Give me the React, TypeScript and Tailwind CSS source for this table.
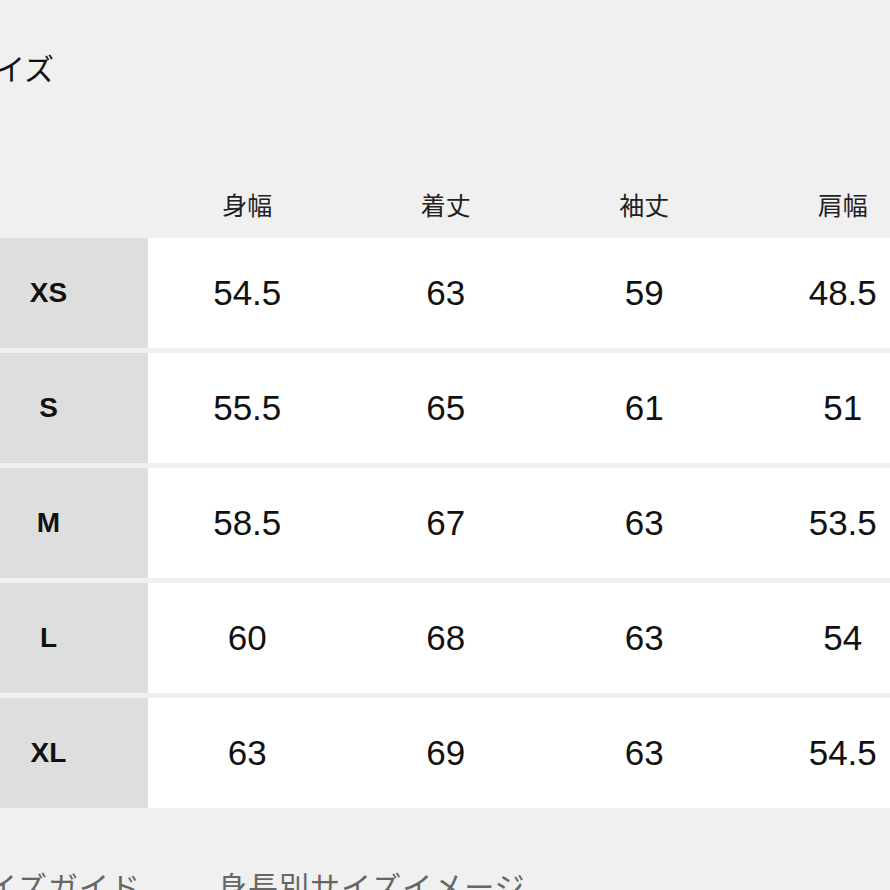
const headers = ["身幅", "着丈", "袖丈", "肩幅"];

const rows = [
  { size: "XS", values: ["54.5", "63", "59", "48.5"] },
  { size: "S", values: ["55.5", "65", "61", "51"] },
  { size: "M", values: ["58.5", "67", "63", "53.5"] },
  { size: "L", values: ["60", "68", "63", "54"] },
  { size: "XL", values: ["63", "69", "63", "54.5"] },
];

const jp = { fontFamily: '"Noto Sans CJK JP", "Noto Sans", sans-serif' };
const latin = { fontFamily: '"Liberation Sans", Arial, sans-serif' };

export default function App() {
  return (
    <main className="w-[890px] h-[890px] overflow-hidden bg-[#f0f0f0]">
      <div className="-ml-[51px] w-[993px]">
        <h2
          className="mt-[46px] pl-[16px] text-[30px] leading-[42px] text-[#111] font-normal"
          style={jp}
        >
          サイズ
        </h2>

        <div className="mt-[97px] grid grid-cols-[199px_repeat(4,198.5px)] h-[40px] items-center">
          <div />
          {headers.map((h) => (
            <div key={h} className="text-center text-[25px] text-[#222]" style={jp}>
              {h}
            </div>
          ))}
        </div>

        <div className="mt-[13px] flex flex-col gap-[5px]">
          {rows.map((row) => (
            <div
              key={row.size}
              className="grid grid-cols-[199px_repeat(4,198.5px)] h-[110px] items-stretch"
            >
              <div
                className="bg-[#dedede] flex items-center justify-center text-[28px] font-bold text-[#111]"
                style={latin}
              >
                {row.size}
              </div>
              {row.values.map((v, i) => (
                <div
                  key={i}
                  className="bg-white flex items-center justify-center text-[35px] text-[#111]"
                  style={latin}
                >
                  {v}
                </div>
              ))}
            </div>
          ))}
        </div>

        <div
          className="mt-[59px] pl-[7px] flex gap-[76px] text-[30px] leading-[36px] text-[#666] tracking-[1px]"
          style={jp}
        >
          <span>サイズガイド</span>
          <span>身長別サイズイメージ</span>
        </div>
      </div>
    </main>
  );
}
